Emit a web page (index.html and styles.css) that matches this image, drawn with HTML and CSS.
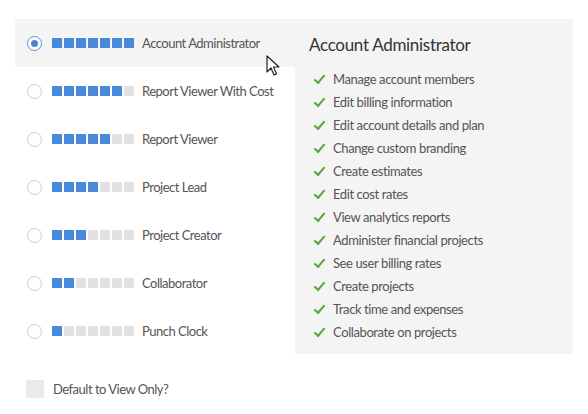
FILE: index.html
```html
<!DOCTYPE html>
<html lang="en">
  <head>
    <meta charset="UTF-8" />
    <title>Roles</title>
    <link rel="stylesheet" href="styles.css">
  </head>
  <body>
    <div class="roles">
      <!-- Role picker on the left -->
      <ul class="role-list">
        <li class="role selected">
          <span class="radio"></span>
          <span class="level"><i class="on"></i><i class="on"></i><i class="on"></i><i class="on"></i><i class="on"></i><i class="on"></i><i class="on"></i></span>
          <span class="role-name">Account Administrator</span>
        </li>
        <li class="role">
          <span class="radio"></span>
          <span class="level"><i class="on"></i><i class="on"></i><i class="on"></i><i class="on"></i><i class="on"></i><i class="on"></i><i></i></span>
          <span class="role-name">Report Viewer With Cost</span>
        </li>
        <li class="role">
          <span class="radio"></span>
          <span class="level"><i class="on"></i><i class="on"></i><i class="on"></i><i class="on"></i><i class="on"></i><i></i><i></i></span>
          <span class="role-name">Report Viewer</span>
        </li>
        <li class="role">
          <span class="radio"></span>
          <span class="level"><i class="on"></i><i class="on"></i><i class="on"></i><i class="on"></i><i></i><i></i><i></i></span>
          <span class="role-name">Project Lead</span>
        </li>
        <li class="role">
          <span class="radio"></span>
          <span class="level"><i class="on"></i><i class="on"></i><i class="on"></i><i></i><i></i><i></i><i></i></span>
          <span class="role-name">Project Creator</span>
        </li>
        <li class="role">
          <span class="radio"></span>
          <span class="level"><i class="on"></i><i class="on"></i><i></i><i></i><i></i><i></i><i></i></span>
          <span class="role-name">Collaborator</span>
        </li>
        <li class="role">
          <span class="radio"></span>
          <span class="level"><i class="on"></i><i></i><i></i><i></i><i></i><i></i><i></i></span>
          <span class="role-name">Punch Clock</span>
        </li>
      </ul>

      <!-- Permissions of the selected role -->
      <div class="details">
        <h3>Account Administrator</h3>
        <ul class="perms">
          <li>Manage account members</li>
          <li>Edit billing information</li>
          <li>Edit account details and plan</li>
          <li>Change custom branding</li>
          <li>Create estimates</li>
          <li>Edit cost rates</li>
          <li>View analytics reports</li>
          <li>Administer financial projects</li>
          <li>See user billing rates</li>
          <li>Create projects</li>
          <li>Track time and expenses</li>
          <li>Collaborate on projects</li>
        </ul>
      </div>
    </div>

    <label class="view-only">
      <span class="checkbox"></span>
      Default to View Only?
    </label>

    <!-- mouse pointer hovering the list -->
    <svg class="cursor" width="14" height="22" viewBox="0 0 14 22">
      <path d="M1 1 L1 17 L5 13 L8 20 L10.5 19 L7.5 12 L13 12 Z" fill="#fff" stroke="#222" stroke-width="1.2" stroke-linejoin="round"/>
    </svg>
  </body>
</html>
```

FILE: styles.css
```css
body {
  margin: 0;
  background: #fff;
  font-family: Lato, "Noto Sans", sans-serif;
  color: #555;
  position: relative;
}

.roles {
  display: flex;
  padding: 19px 0 0 15px;
}

.role-list {
  list-style: none;
  margin: 0;
  padding: 0;
  width: 280px;
}

.role {
  display: flex;
  align-items: center;
  height: 48px;
  padding-left: 12px;
  font-size: 13px;
  letter-spacing: -0.5px;
}

.role.selected {
  background: #f4f4f4;
}

.radio {
  width: 13px;
  height: 13px;
  border: 1px solid #ccc;
  border-radius: 50%;
  background: #fff;
  margin-right: 10px;
  display: flex;
  align-items: center;
  justify-content: center;
}

.selected .radio {
  border-color: #5b8fd6;
}

.selected .radio::after {
  content: "";
  width: 7px;
  height: 7px;
  border-radius: 50%;
  background: #4a86d8;
}

.level {
  display: flex;
  gap: 2px;
  margin-right: 8px;
}

.level i {
  width: 10px;
  height: 10px;
  background: #e2e2e2;
}

.level i.on {
  background: #4a88dc;
}

.details {
  width: 264px;
  height: 323px;
  background: #f4f4f4;
  padding: 12px 0 0 14px;
}

.details h3 {
  margin: 0 0 9px;
  font-size: 17px;
  font-weight: normal;
  color: #333;
  line-height: 28px;
  letter-spacing: -0.3px;
}

.perms {
  list-style: none;
  margin: 0;
  padding: 0 0 0 4px;
  font-size: 13px;
  letter-spacing: -0.4px;
}

.perms li {
  height: 23px;
  line-height: 23px;
  display: flex;
  align-items: center;
}

.perms li::before {
  content: "";
  width: 9px;
  height: 4px;
  border-left: 2px solid #5aa53c;
  border-bottom: 2px solid #5aa53c;
  transform: rotate(-50deg);
  margin: -4px 8px 0 1px;
}

.view-only {
  display: flex;
  align-items: center;
  margin: 25px 0 0 26px;
  font-size: 13px;
  letter-spacing: -0.5px;
}

.checkbox {
  width: 18px;
  height: 18px;
  background: #ebebeb;
  margin-right: 9px;
}

.cursor {
  position: absolute;
  left: 266px;
  top: 55px;
}
```
